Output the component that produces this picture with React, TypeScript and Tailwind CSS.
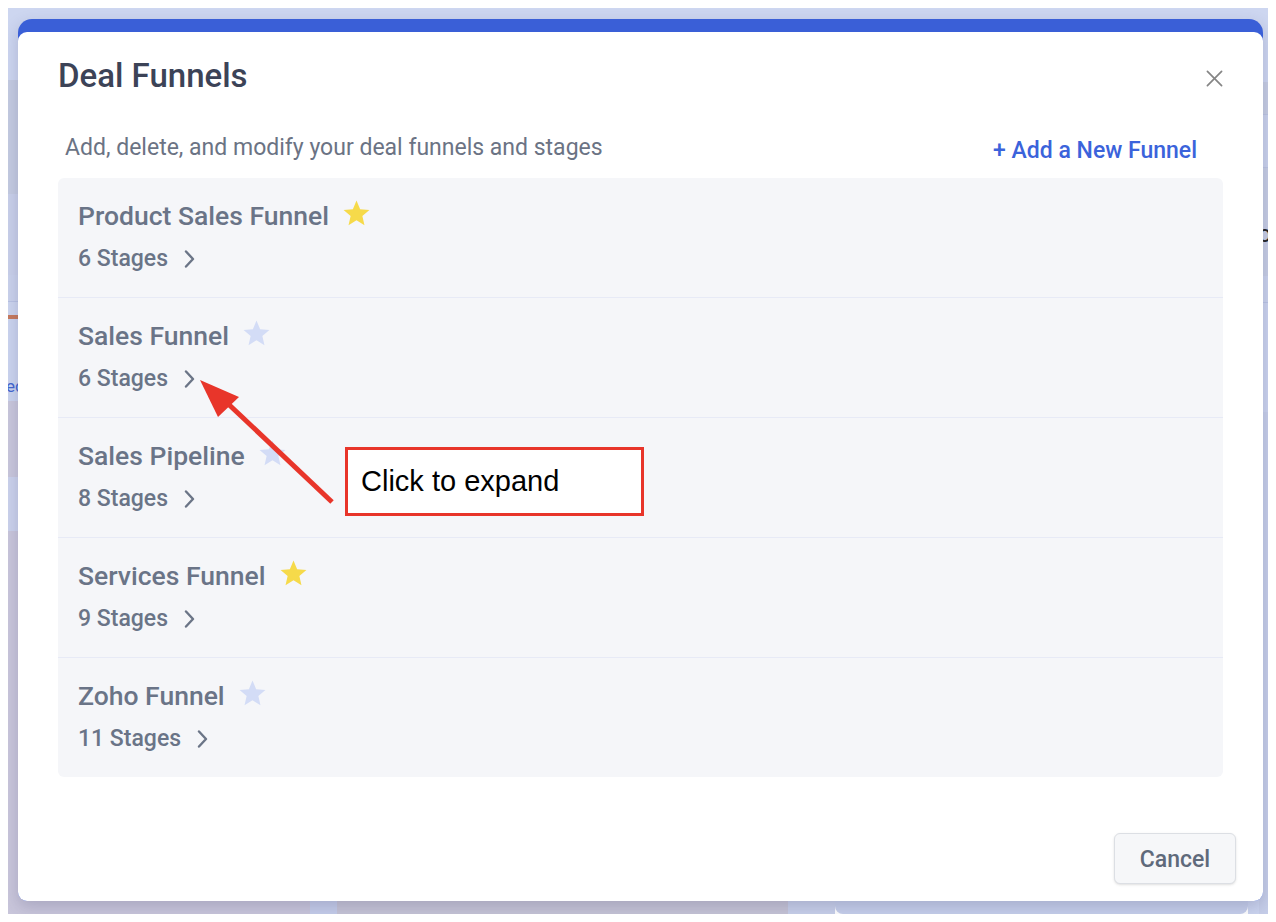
import { Fragment } from 'react';

type Funnel = {
  name: string;
  stages: number;
  starred: boolean;
};

const funnels: Funnel[] = [
  { name: 'Product Sales Funnel', stages: 6, starred: true },
  { name: 'Sales Funnel', stages: 6, starred: false },
  { name: 'Sales Pipeline', stages: 8, starred: false },
  { name: 'Services Funnel', stages: 9, starred: true },
  { name: 'Zoho Funnel', stages: 11, starred: false },
];

const StarIcon = ({ filled }: { filled: boolean }) => (
  <svg viewBox="0 0 24 24" className={filled ? 'h-[31px] w-[31px] fill-[#f6da4a]' : 'h-[31px] w-[31px] fill-[#d3dcf6]'}>
    <path d="M12 17.27L18.18 21l-1.64-7.03L22 9.24l-7.19-.61L12 2 9.19 8.63 2 9.24l5.46 4.73L5.82 21z" />
  </svg>
);

const Chevron = () => (
  <svg viewBox="0 0 12 18" className="h-[18px] w-[12px]" fill="none" stroke="#6b7587" strokeWidth="2.4" strokeLinecap="round" strokeLinejoin="round">
    <polyline points="3,1.5 10,9 3,16.5" />
  </svg>
);

const FunnelRow = ({ funnel, last }: { funnel: Funnel; last: boolean }) => (
  <div className={`px-5 pt-[22px] pb-6 ${last ? '' : 'border-b border-[#e7eaf6]'}`}>
    <div className="flex h-8 items-center">
      <span className="text-[26.5px] font-medium leading-8 text-[#6a7487]">{funnel.name}</span>
      <span className="ml-[12px] -mt-[6px]">
        <StarIcon filled={funnel.starred} />
      </span>
    </div>
    <div className="mt-[13px] flex h-7 items-center">
      <span className="text-[23px] font-medium leading-7 text-[#6a7487]">{funnel.stages} Stages</span>
      <span className="ml-[15px]">
        <Chevron />
      </span>
    </div>
  </div>
);

// blurred page behind the dialog
const Backdrop = () => (
  <div className="flex h-full">
    <div className="flex w-[302px] flex-col">
      <div className="h-[72px] bg-[#cdd6f0]" />
      <div className="h-[114px] bg-[#c4cbe1]" />
      <div className="h-[81px] bg-[#c9d0ea]" />
      <div className="h-[27px] border-b border-[#b9c3e4] bg-[#cad2ec]" />
      <div className="h-[13px] bg-[#ccd5ef]" />
      <div className="h-[4px] bg-[#c67a5e]" />
      <div className="flex h-[82px] items-end bg-[#cbd4ef] pb-[2px] text-[17px] text-[#4466d0]">
        <span className="-ml-[2px]">ed</span>
      </div>
      <div className="h-[76px] bg-[#c9c7dc]" />
      <div className="h-[54px] bg-[#cbd2ec]" />
      <div className="flex-1 bg-[#c9c6db]" />
    </div>
    <div className="flex flex-1 flex-col">
      <div className="flex-1 bg-[#cdd6f0]" />
      <div className="flex h-[16px]">
        <div className="w-[27px] bg-[#c5cdea]" />
        <div className="w-[451px] bg-[#c6c4d6]" />
        <div className="w-[47px] bg-[#c8d0ea]" />
        <div className="w-[413px] rounded-b-lg bg-[#c6cfeb]" />
        <div className="flex-1 bg-[#cbd4ef]" />
      </div>
    </div>
    <div className="flex w-[9px] flex-col overflow-hidden">
      <div className="h-[74px] bg-[#cdd6f0]" />
      <div className="h-[33px] border-b border-[#bcc5e2] bg-[#c6cde3]" />
      <div className="h-[53px] border-b border-[#bcc5e2] bg-[#cad2ec]" />
      <div className="flex h-[108px] items-center bg-[#c6cde4] pt-[24px] text-[24px] text-[#222]">
        <span className="-ml-[1px]">o</span>
      </div>
      <div className="h-[27px] border-b border-[#b9c3e4] bg-[#cad2ec]" />
      <div className="h-[109px] bg-[#cbd3ee]" />
      <div className="flex-1 bg-[#c6cee9]" />
    </div>
  </div>
);

export default function App() {
  return (
    <div className="h-[922px] w-[1276px] bg-white p-2" style={{ fontFamily: 'Roboto, "Noto Sans", sans-serif' }}>
      <div className="relative h-full w-full overflow-hidden">
        <Backdrop />

        {/* Dialog */}
        <div className="absolute left-[10px] top-[11px] flex h-[882px] w-[1245px] flex-col rounded-t-[14px] rounded-b-[9px] bg-[#3a5fd7] pt-[13px] shadow-[0_6px_16px_rgba(60,60,100,0.22)]">
          <div className="flex flex-1 flex-col rounded-[9px] bg-white px-10">
            <div className="flex items-center justify-between pt-6">
              <h1 className="text-[33px] font-medium leading-10 text-[#3c4357]">Deal Funnels</h1>
              <button className="-mr-[2px] mt-[4px] p-0.5">
                <svg viewBox="0 0 18 18" className="h-[17px] w-[17px]" stroke="#858585" strokeWidth="1.8" strokeLinecap="round">
                  <line x1="1.5" y1="1.5" x2="16.5" y2="16.5" />
                  <line x1="16.5" y1="1.5" x2="1.5" y2="16.5" />
                </svg>
              </button>
            </div>

            <div className="mt-[38px] flex items-end justify-between pl-[7px] pr-[26px]">
              <p className="text-[23px] leading-7 text-[#6b7384]">Add, delete, and modify your deal funnels and stages</p>
              <button className="translate-y-[3px] text-[23px] font-medium leading-7 text-[#3b63db]">+ Add a New Funnel</button>
            </div>

            <div className="mt-4 rounded-md bg-[#f5f6f9]">
              {funnels.map((funnel, i) => (
                <Fragment key={funnel.name}>
                  <FunnelRow funnel={funnel} last={i === funnels.length - 1} />
                </Fragment>
              ))}
            </div>

            <div className="mt-auto flex justify-end pb-[17px]">
              <button className="-mr-[13px] h-[51px] w-[122px] rounded-md border border-[#dcdfe4] bg-[#f6f7f9] pt-[3px] text-[23px] font-medium text-[#5f6a7b] shadow-sm">
                Cancel
              </button>
            </div>
          </div>
        </div>

        {/* Annotation */}
        <svg className="absolute left-0 top-0 h-full w-full" viewBox="0 0 1260 906">
          <line x1="324" y1="494" x2="215" y2="391" stroke="#e8352a" strokeWidth="5" />
          <polygon points="192,372 231,389 210,409" fill="#e8352a" />
        </svg>
        <div className="absolute left-[337px] top-[439px] flex h-[69px] w-[299px] items-center border-[3px] border-[#e8352a] bg-white pl-[13px]">
          <span className="text-[29px] text-black" style={{ fontFamily: '"Liberation Sans", Arial, sans-serif' }}>
            Click to expand
          </span>
        </div>
      </div>
    </div>
  );
}
